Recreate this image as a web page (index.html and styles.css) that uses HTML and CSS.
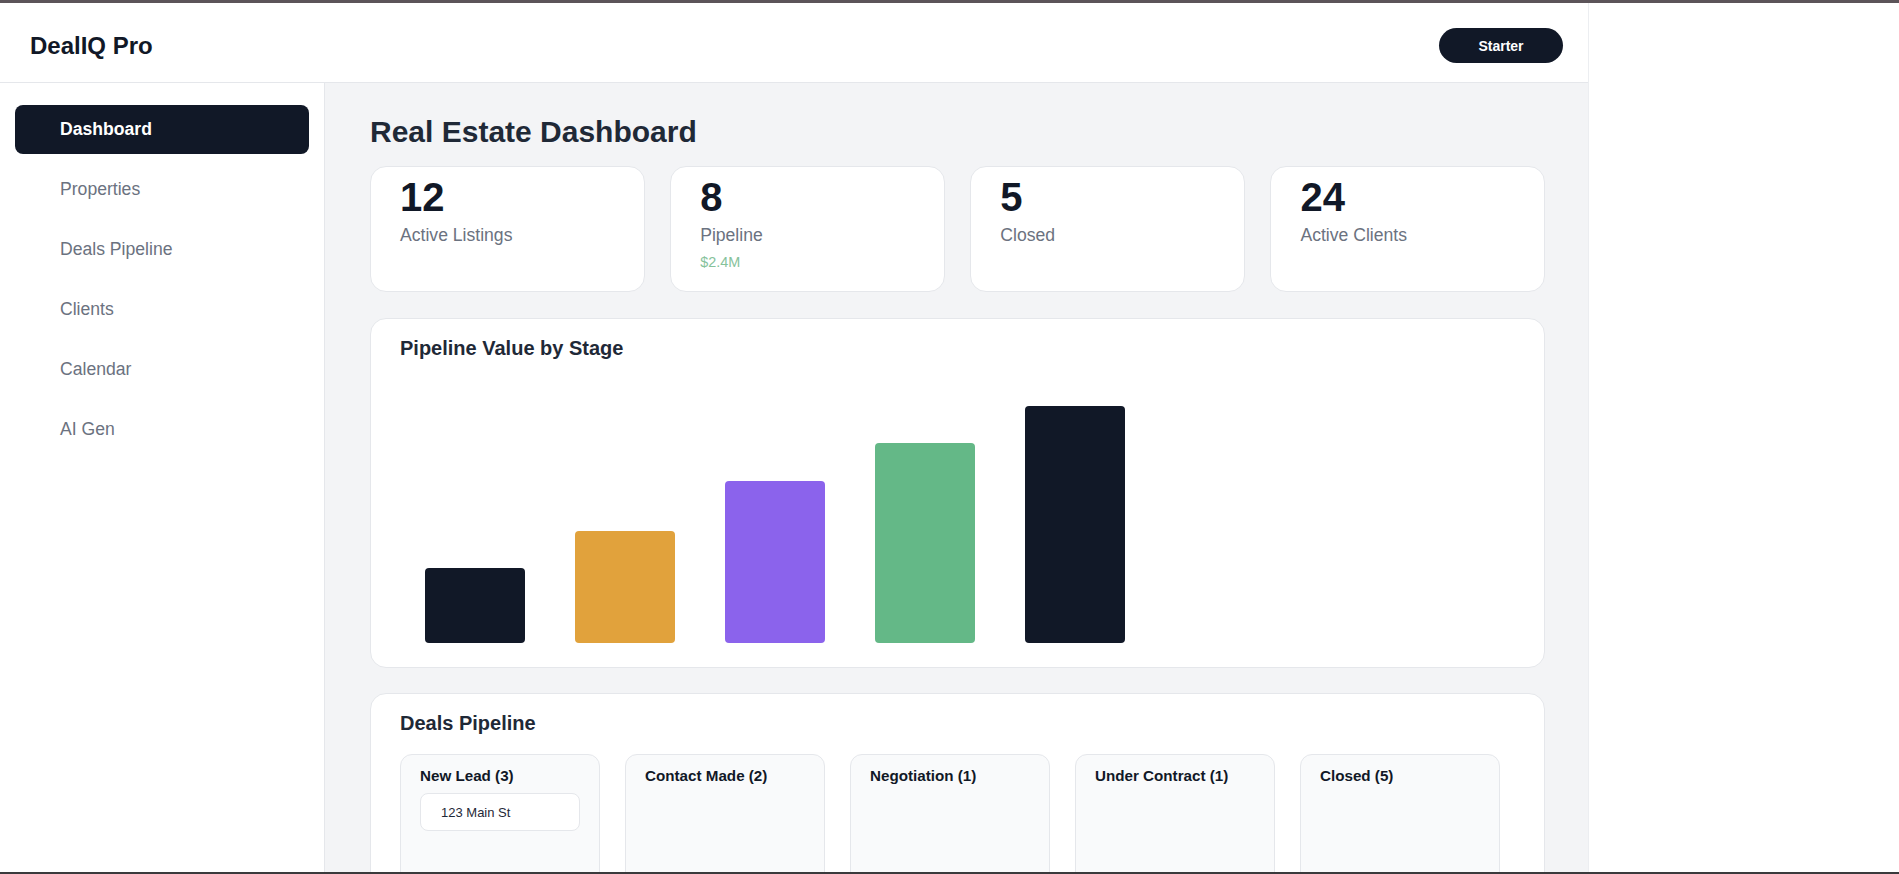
FILE: index.html
```html
<!DOCTYPE html>
<html lang="en">
<head>
<meta charset="utf-8">
<title>DealIQ Pro</title>
<link rel="stylesheet" href="styles.css">
</head>
<body>
<div class="frame-top"></div>
<div class="app">
  <header class="header">
    <div class="logo">DealIQ Pro</div>
    <button class="plan-btn">Starter</button>
  </header>
  <div class="body">
    <aside class="sidebar">
      <nav class="nav">
        <a class="nav-item active">Dashboard</a>
        <a class="nav-item">Properties</a>
        <a class="nav-item">Deals Pipeline</a>
        <a class="nav-item">Clients</a>
        <a class="nav-item">Calendar</a>
        <a class="nav-item">AI Gen</a>
      </nav>
    </aside>
    <main class="main">
      <h1 class="page-title">Real Estate Dashboard</h1>
      <div class="content">
        <section class="stats">
          <div class="stat-card">
            <div class="stat-num">12</div>
            <div class="stat-label">Active Listings</div>
          </div>
          <div class="stat-card">
            <div class="stat-num">8</div>
            <div class="stat-label">Pipeline</div>
            <div class="stat-sub">$2.4M</div>
          </div>
          <div class="stat-card">
            <div class="stat-num">5</div>
            <div class="stat-label">Closed</div>
          </div>
          <div class="stat-card">
            <div class="stat-num">24</div>
            <div class="stat-label">Active Clients</div>
          </div>
        </section>

        <section class="panel">
          <h2 class="panel-title">Pipeline Value by Stage</h2>
          <div class="chart">
            <div class="bar bar-dark" style="height:75px"></div>
            <div class="bar bar-orange" style="height:112px"></div>
            <div class="bar bar-purple" style="height:162px"></div>
            <div class="bar bar-green" style="height:200px"></div>
            <div class="bar bar-dark" style="height:237px"></div>
          </div>
        </section>

        <section class="panel">
          <h2 class="panel-title deals-title">Deals Pipeline</h2>
          <div class="kanban">
            <div class="column">
              <div class="column-title">New Lead (3)</div>
              <div class="deal">123 Main St</div>
            </div>
            <div class="column">
              <div class="column-title">Contact Made (2)</div>
            </div>
            <div class="column">
              <div class="column-title">Negotiation (1)</div>
            </div>
            <div class="column">
              <div class="column-title">Under Contract (1)</div>
            </div>
            <div class="column">
              <div class="column-title">Closed (5)</div>
            </div>
          </div>
        </section>
      </div>
    </main>
  </div>
</div>
<div class="frame-bottom"></div>
</body>
</html>
```

FILE: styles.css
```css
* {
  box-sizing: border-box;
}

body {
  margin: 0;
  background: #ffffff;
  font-family: "Liberation Sans", Arial, Helvetica, sans-serif;
  color: #1f2937;
}

.frame-top {
  position: fixed;
  top: 0;
  left: 0;
  right: 0;
  height: 3px;
  background: #5c5459;
  z-index: 10;
}

.frame-bottom {
  position: fixed;
  bottom: 0;
  left: 0;
  right: 0;
  height: 2px;
  background: #3a3a3c;
  z-index: 10;
}

.app {
  width: 1589px;
  border-right: 1px solid #eceef1;
}

/* Header */
.header {
  height: 83px;
  padding: 9px 25px 0 30px;
  display: flex;
  align-items: center;
  justify-content: space-between;
  background: #ffffff;
  border-bottom: 1px solid #e5e7eb;
}

.logo {
  font-size: 24px;
  font-weight: 700;
  color: #111827;
}

.plan-btn {
  width: 124px;
  height: 35px;
  border: none;
  border-radius: 18px;
  background: #111827;
  color: #ffffff;
  font-family: inherit;
  font-size: 14px;
  font-weight: 700;
  padding: 0;
}

/* Body layout */
.body {
  display: flex;
}

.sidebar {
  width: 325px;
  flex: none;
  background: #ffffff;
  border-right: 1px solid #e5e7eb;
  padding: 22px 15px 0;
}

.nav {
  display: flex;
  flex-direction: column;
  gap: 11px;
}

.nav-item {
  display: block;
  height: 49px;
  line-height: 49px;
  padding: 0 45px;
  border-radius: 8px;
  font-size: 17.6px;
  color: #6b7280;
}

.nav-item.active {
  background: #111827;
  color: #ffffff;
  font-weight: 700;
}

.main {
  flex: 1;
  background: #f3f4f6;
  padding: 32px 43px 40px 45px;
}

.page-title {
  margin: 0 0 17px;
  font-size: 30px;
  font-weight: 700;
  color: #1f2937;
  line-height: normal;
}

.content {
  display: flex;
  flex-direction: column;
  gap: 25.6px;
}

/* Stats */
.stats {
  display: grid;
  grid-template-columns: repeat(4, 1fr);
  gap: 25.6px;
}

.stat-card {
  background: #ffffff;
  border: 1px solid #e5e7eb;
  border-radius: 16px;
  padding: 7px 29px 21px;
}

.stat-num {
  font-size: 40px;
  line-height: 46px;
  font-weight: 700;
  color: #111827;
}

.stat-label {
  margin-top: 5px;
  font-size: 17.6px;
  color: #6b7280;
}

.stat-sub {
  margin-top: 8px;
  font-size: 14.4px;
  color: #86c29b;
}

/* Panels */
.panel {
  background: #ffffff;
  border: 1px solid #e5e7eb;
  border-radius: 16px;
  padding: 18px 29px 24px;
}

.panel-title {
  margin: 0;
  font-size: 20px;
  line-height: 23px;
  font-weight: 700;
  color: #1f2937;
}

.chart {
  height: 283px;
  display: flex;
  align-items: flex-end;
  gap: 50px;
  padding-left: 25px;
}

.bar {
  width: 100px;
  border-radius: 4px;
}

.bar-dark { background: #111827; }
.bar-orange { background: #e1a23c; }
.bar-purple { background: #8b63ec; }
.bar-green { background: #64b887; }

.deals-title {
  margin-bottom: 19px;
}

.kanban {
  display: flex;
  gap: 25px;
}

.column {
  width: 200px;
  min-height: 260px;
  background: #f9fafb;
  border: 1px solid #e5e7eb;
  border-radius: 12px;
  padding: 12px 19px;
}

.column-title {
  font-size: 15.2px;
  font-weight: 700;
  color: #111827;
  margin-bottom: 9px;
}

.deal {
  background: #ffffff;
  border: 1px solid #e5e7eb;
  border-radius: 8px;
  padding: 11px 20px 10px;
  font-size: 13px;
  line-height: 15px;
  color: #1f2937;
}
```
